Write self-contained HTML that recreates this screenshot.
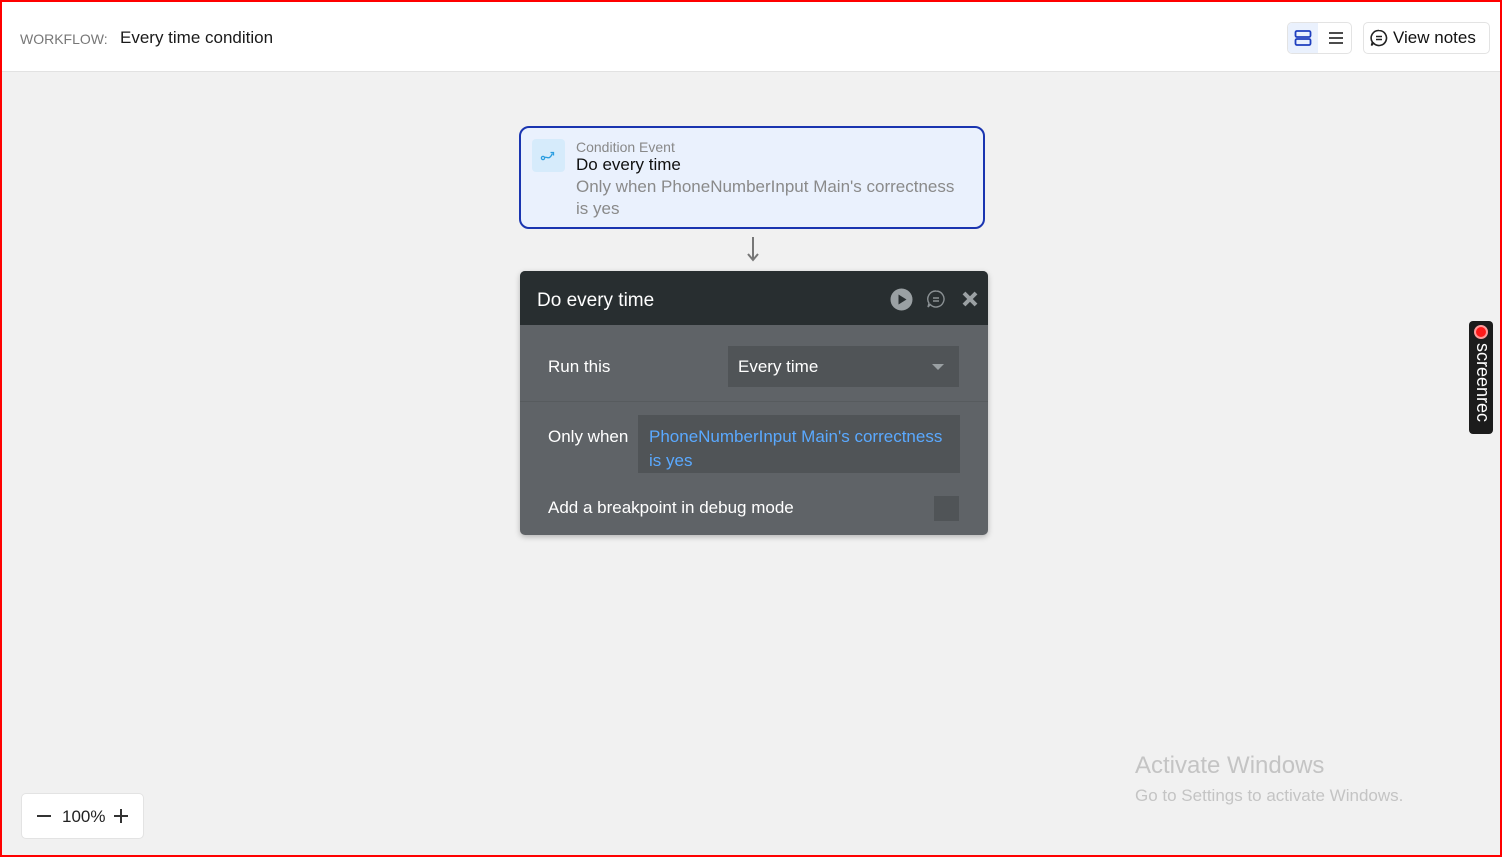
<!DOCTYPE html>
<html><head><style>
*{box-sizing:border-box;margin:0;padding:0}
body{width:1502px;height:857px;overflow:hidden;background:#f1f1f1;font-family:"Liberation Sans",sans-serif;position:relative}
.frame{position:absolute;left:0;top:0;width:1502px;height:857px;border:2px solid #ff0000;pointer-events:none;z-index:10}
.top{position:absolute;left:0;top:0;width:1502px;height:72px;background:#fff;border-bottom:1px solid #e2e2e2}
.abs{position:absolute;white-space:nowrap}
</style></head><body>
<div class="frame"></div>
<div class="top"></div>
<div class="abs" style="left:20px;top:31px;font-size:14px;color:#777">WORKFLOW:</div>
<div class="abs" style="left:120px;top:28px;font-size:17px;color:#1a1a1a">Every time condition</div>
<div class="abs" style="left:1287px;top:22px;width:65px;height:32px;border:1px solid #e3e3e3;border-radius:5px;background:#fff"></div>
<div class="abs" style="left:1288px;top:23px;width:30px;height:30px;background:#eaf1fd;border-radius:4px 0 0 4px"></div>
<svg class="abs" style="left:1294px;top:29px" width="18" height="18" viewBox="0 0 18 18"><rect x="1.5" y="2" width="15" height="6" rx="1.5" fill="none" stroke="#1f3fbf" stroke-width="1.8"/><rect x="1.5" y="10" width="15" height="6" rx="1.5" fill="none" stroke="#1f3fbf" stroke-width="1.8"/></svg>
<svg class="abs" style="left:1327px;top:29px" width="18" height="18" viewBox="0 0 18 18"><path d="M2 4h14M2 9h14M2 14h14" stroke="#333" stroke-width="1.8"/></svg>
<div class="abs" style="left:1363px;top:22px;width:127px;height:32px;border:1px solid #e3e3e3;border-radius:5px;background:#fff"></div>
<svg class="abs" style="left:1369px;top:28px" width="20" height="20" viewBox="0 0 20 20"><path d="M10 2.5a7.5 7.5 0 1 1-5.5 12.6L2.5 17.5l.9-3.4A7.5 7.5 0 0 1 10 2.5z" fill="none" stroke="#222" stroke-width="1.6"/><path d="M7 8.5h6M7 11.5h6" stroke="#222" stroke-width="1.5"/></svg>
<div class="abs" style="left:1393px;top:28px;font-size:17px;color:#111">View notes</div>

<div class="abs" style="left:519px;top:126px;width:466px;height:103px;background:#eaf1fd;border:2px solid #1a35b0;border-radius:10px"></div>
<div class="abs" style="left:532px;top:139px;width:33px;height:33px;background:#d6ebfb;border-radius:4px"></div>
<svg class="abs" style="left:539px;top:146px" width="18" height="18" viewBox="0 0 18 18"><circle cx="4" cy="12" r="1.6" fill="none" stroke="#2a9de0" stroke-width="1.3"/><path d="M5.5 11.5c2-1 3 1 5 0s2-3 3-4" fill="none" stroke="#2a9de0" stroke-width="1.3"/><path d="M11.5 6.5h3v3" fill="none" stroke="#2a9de0" stroke-width="1.3"/></svg>
<div class="abs" style="left:576px;top:139px;font-size:14px;color:#888">Condition Event</div>
<div class="abs" style="left:576px;top:155px;font-size:17px;color:#111">Do every time</div>
<div class="abs" style="left:576px;top:176px;font-size:17px;color:#8a8a8a;line-height:22px;white-space:normal;width:385px">Only when PhoneNumberInput Main's correctness is yes</div>
<svg class="abs" style="left:745px;top:236px" width="16" height="26" viewBox="0 0 16 26"><path d="M8 1v22" stroke="#777" stroke-width="2"/><path d="M3 18l5 6 5-6" fill="none" stroke="#777" stroke-width="2"/></svg>

<div class="abs" style="left:520px;top:271px;width:468px;height:264px;background:#5f6367;border-radius:5px;box-shadow:0 2px 6px rgba(0,0,0,.25);overflow:hidden">
 <div style="height:54px;background:#282e30"></div>
 <div style="position:absolute;left:0;top:130px;width:468px;height:1px;background:#575b5e"></div>
</div>
<div class="abs" style="left:537px;top:290px;font-size:19px;color:#fff">Do every time</div>
<svg class="abs" style="left:890px;top:288px" width="23" height="23" viewBox="0 0 23 23"><circle cx="11.5" cy="11.5" r="11" fill="#9aa0a3"/><path d="M8.5 6.5v10l8-5z" fill="#282e30"/></svg>
<svg class="abs" style="left:926px;top:289px" width="20" height="20" viewBox="0 0 20 20"><path d="M10 2a8 8 0 1 1-5.8 13.5L2 18l1-3.8A8 8 0 0 1 10 2z" fill="none" stroke="#8a9093" stroke-width="1.4"/><path d="M7 9h6M7 12h6" stroke="#8a9093" stroke-width="1.4"/></svg>
<svg class="abs" style="left:961px;top:290px" width="18" height="18" viewBox="0 0 18 18"><path d="M3 3l12 12M15 3L3 15" stroke="#9aa0a3" stroke-width="4"/></svg>
<div class="abs" style="left:548px;top:357px;font-size:17px;color:#fff">Run this</div>
<div class="abs" style="left:728px;top:346px;width:231px;height:41px;background:#505457"></div>
<div class="abs" style="left:738px;top:357px;font-size:17px;color:#fff">Every time</div>
<div class="abs" style="left:932px;top:364px;width:0;height:0;border-left:6px solid transparent;border-right:6px solid transparent;border-top:6px solid #9aa0a3"></div>
<div class="abs" style="left:548px;top:427px;font-size:17px;color:#fff">Only when</div>
<div class="abs" style="left:638px;top:415px;width:322px;height:58px;background:#505457"></div>
<div class="abs" style="left:649px;top:425px;width:310px;font-size:17px;line-height:24px;color:#5aa9ff;white-space:normal">PhoneNumberInput Main's correctness is yes</div>
<div class="abs" style="left:548px;top:498px;font-size:17px;color:#fff">Add a breakpoint in debug mode</div>
<div class="abs" style="left:934px;top:496px;width:25px;height:25px;background:#505457"></div>

<div class="abs" style="left:1469px;top:321px;width:24px;height:113px;background:#1c1c1c;border-radius:4px"></div>
<div class="abs" style="left:1474px;top:325px;width:14px;height:14px;border-radius:50%;background:#ff1a1a;border:2px solid #ff9a9a"></div>
<div class="abs" style="left:1472px;top:343px;font-size:18px;color:#fff;writing-mode:vertical-rl">screenrec</div>

<div class="abs" style="left:1135px;top:752px;font-size:24px;color:#c4c4c4">Activate Windows</div>
<div class="abs" style="left:1135px;top:786px;font-size:17px;color:#c4c4c4">Go to Settings to activate Windows.</div>

<div class="abs" style="left:21px;top:793px;width:123px;height:46px;background:#fff;border:1px solid #e3e3e3;border-radius:5px"></div>
<div class="abs" style="left:37px;top:815px;width:14px;height:2px;background:#333"></div>
<div class="abs" style="left:62px;top:807px;font-size:17px;color:#222">100%</div>
<div class="abs" style="left:114px;top:815px;width:14px;height:2px;background:#333"></div>
<div class="abs" style="left:120px;top:809px;width:2px;height:14px;background:#333"></div>
</body></html>
